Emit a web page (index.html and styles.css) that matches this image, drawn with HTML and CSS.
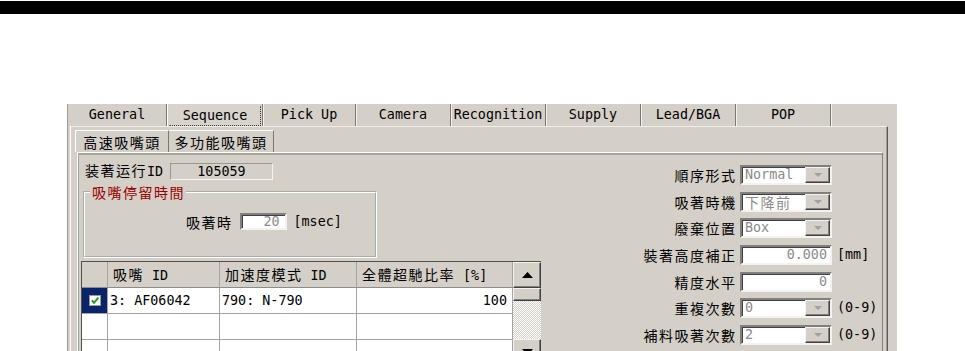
FILE: index.html
```html
<!DOCTYPE html>
<html>
<head>
<meta charset="utf-8">
<link rel="stylesheet" href="styles.css">
</head>
<body>
<div class="topbar"></div>
<div class="window">
  <div class="tabs">
    <div class="tab w99">General</div>
    <div class="tab w96 sel"><span class="focus">Sequence</span></div>
    <div class="tab w93">Pick Up</div>
    <div class="tab">Camera</div>
    <div class="tab">Recognition</div>
    <div class="tab">Supply</div>
    <div class="tab">Lead/BGA</div>
    <div class="tab">POP</div>
  </div>
  <div class="panel">
    <div class="subtabs">
      <div class="subtab st1 sel"><span class="cj">高速吸嘴頭</span></div>
      <div class="subtab st2"><span class="cj">多功能吸嘴頭</span></div>
    </div>
    <div class="inner">
      <div class="leftcol">
        <div class="idrow">
          <span class="idlbl"><span class="cj">装著运行</span>ID</span>
          <span class="robox">105059</span>
        </div>
        <fieldset class="group">
          <legend class="cj">吸嘴停留時間</legend>
          <div class="grow">
            <span class="cj">吸著時</span>
            <span class="field small">20</span>
            <span>[msec]</span>
          </div>
        </fieldset>
        <div class="gridwrap">
          <div class="grid">
            <div class="row head">
              <div class="cell"></div>
              <div class="cell hc"><span><span class="cj">吸嘴</span> ID</span></div>
              <div class="cell hc"><span><span class="cj">加速度模式</span> ID</span></div>
              <div class="cell hc"><span><span class="cj">全體超馳比率</span> [%]</span></div>
            </div>
            <div class="row">
              <div class="cell rh selrh">
                <svg class="chk" width="12" height="11" viewBox="0 0 12 11"><rect x="0.5" y="0.5" width="11" height="10" fill="#fff" stroke="#9a9a9a"/><path d="M2.8 5.4 L5 7.8 L9.4 2.6" fill="none" stroke="#1e9a1e" stroke-width="2"/></svg>
              </div>
              <div class="cell dc">3: AF06042</div>
              <div class="cell dc">790: N-790</div>
              <div class="cell dc num">100</div>
            </div>
            <div class="row">
              <div class="cell rh"></div>
              <div class="cell dc"></div>
              <div class="cell dc"></div>
              <div class="cell dc"></div>
            </div>
            <div class="row">
              <div class="cell rh"></div>
              <div class="cell dc"></div>
              <div class="cell dc"></div>
              <div class="cell dc"></div>
            </div>
          </div>
          <div class="vscroll">
            <div class="sbtn"><svg width="11" height="6" viewBox="0 0 11 6"><polygon points="0,6 5.5,0 11,6" fill="#000"/></svg></div>
            <div class="thumb"></div>
            <div class="track"></div>
            <div class="sbtn down"><svg width="11" height="6" viewBox="0 0 11 6"><polygon points="0,0 5.5,6 11,0" fill="#000"/></svg></div>
          </div>
        </div>
      </div>
      <div class="form">
        <span class="flbl cj">順序形式</span>
        <div class="combo"><span class="ctext">Normal</span><span class="dd"><svg width="8" height="4" viewBox="0 0 8 4"><polygon points="0,0 4,4 8,0" fill="#a0a0a0"/></svg></span></div>
        <span></span>

        <span class="flbl cj">吸著時機</span>
        <div class="combo"><span class="ctext cj">下降前</span><span class="dd"><svg width="8" height="4" viewBox="0 0 8 4"><polygon points="0,0 4,4 8,0" fill="#a0a0a0"/></svg></span></div>
        <span></span>

        <span class="flbl cj">廢棄位置</span>
        <div class="combo"><span class="ctext">Box</span><span class="dd"><svg width="8" height="4" viewBox="0 0 8 4"><polygon points="0,0 4,4 8,0" fill="#a0a0a0"/></svg></span></div>
        <span></span>

        <span class="flbl cj">裝著高度補正</span>
        <div class="field wide">0.000</div>
        <span class="suffix">[mm]</span>

        <span class="flbl cj">精度水平</span>
        <div class="field wide">0</div>
        <span></span>

        <span class="flbl cj">重複次數</span>
        <div class="combo"><span class="ctext">0</span><span class="dd"><svg width="8" height="4" viewBox="0 0 8 4"><polygon points="0,0 4,4 8,0" fill="#a0a0a0"/></svg></span></div>
        <span class="suffix">(0-9)</span>

        <span class="flbl cj">補料吸著次數</span>
        <div class="combo"><span class="ctext">2</span><span class="dd"><svg width="8" height="4" viewBox="0 0 8 4"><polygon points="0,0 4,4 8,0" fill="#a0a0a0"/></svg></span></div>
        <span class="suffix">(0-9)</span>
      </div>
    </div>
  </div>
</div>
</body>
</html>
```

FILE: styles.css
```css
* { box-sizing: border-box; }
html, body { margin: 0; padding: 0; background: #fff; overflow: hidden; }
body {
  width: 965px;
  height: 351px;
  font-family: "DejaVu Sans Mono", "Noto Sans CJK JP", monospace;
  font-size: 13.4px;
  line-height: 16px;
  color: #000;
}
.cj {
  font-family: "Noto Sans CJK JP", "Noto Sans CJK TC", sans-serif;
  font-size: 14px;
  letter-spacing: 1.5px;
  line-height: 16px;
}
.topbar { height: 13px; margin-top: 1px; background: #000; }

.window {
  margin: 90px 0 0 67px;
  width: 830px;
  height: 260px;
  background: #d4d0c8;
  border-left: 1px solid #a09c94;
  overflow: hidden;
}

/* top tabs */
.tabs { display: flex; height: 22px; }
.tab {
  width: 95px;
  height: 22px;
  display: flex;
  align-items: center;
  justify-content: center;
  border-right: 1px solid #7c7870;
  box-shadow: 1px 0 0 #f4f2ee;
  white-space: nowrap;
}
.w99 { width: 99px; }
.w96 { width: 96px; }
.w93 { width: 93px; }
.tab.sel { border-left: 1px solid #fff; background: #d8d4cc; }
.focus {
  flex: 1;
  align-self: stretch;
  margin: 2px 1px 0 1px;
  border: 1px dotted #333;
  border-top-color: transparent;
  border-left-color: transparent;
  display: flex;
  align-items: center;
  justify-content: center;
}

/* outer panel */
.panel {
  margin-left: 2px;
  width: 818px;
  height: 240px;
  border-left: 1px solid #fff;
  border-top: 1px solid #f0eee8;
  border-right: 1px solid #5c5a56;
  box-shadow: inset -1px 0 0 #a09c94;
}
.subtabs { display: flex; height: 22px; margin: 3px 0 0 4px; }
.subtab {
  height: 22px;
  display: flex;
  align-items: center;
  justify-content: center;
  border-top: 1px solid #fff;
  border-right: 1px solid #7c7870;
}
.st1 { width: 94px; border-left: 1px solid #fff; }
.st2 { width: 105px; }

/* inner panel */
.inner {
  margin-left: 6px;
  width: 806px;
  height: 220px;
  border-top: 1px solid #fff;
  border-left: 1px solid #fff;
  border-right: 1px solid #808080;
  box-shadow: inset 1px 2px 0 #a8a49c;
  padding: 10px 0 0 3px;
  display: flex;
  align-items: flex-start;
}
.leftcol { width: 460px; display: flex; flex-direction: column; }

.idrow { display: flex; align-items: center; height: 16px; }
.idlbl { margin-left: 4px; width: 85px; white-space: nowrap; }
.robox {
  width: 103px;
  height: 17px;
  border: 1px solid;
  border-color: #9a9892 #f6f4f0 #f6f4f0 #9a9892;
  text-align: center;
  line-height: 15px;
}

.group {
  margin: 6px 0 0 2px;
  width: 294px;
  padding: 14px 0 26px 0;
  border: 2px groove #fff;
  min-width: 0;
}
.group legend {
  margin-left: 5px;
  padding: 0 1px 0 2px;
  color: #990000;
  line-height: 14px;
}
.grow {
  display: flex;
  align-items: center;
  height: 17px;
  padding-left: 101px;
  gap: 7px;
}
.field {
  height: 17px;
  background: #fff;
  border: 2px solid;
  border-color: #808080 #f4f2ee #f4f2ee #808080;
  box-shadow: inset 1px 1px 0 #404040;
  color: #8a8a8a;
  text-align: right;
  padding-right: 3px;
  line-height: 13px;
}
.small { width: 47px; padding-right: 5px; }
.wide { width: 92px; height: 20px; line-height: 16px; }

/* data grid */
.gridwrap {
  margin-top: 3px;
  width: 460px;
  display: flex;
  border-top: 1px solid #505050;
  border-left: 1px solid #505050;
}
.grid { width: 431px; }
.row {
  display: grid;
  grid-template-columns: 26px 112px 137px 156px;
  height: 26px;
}
.cell {
  border-right: 1px solid #a4a4a4;
  border-bottom: 1px solid #a4a4a4;
  background: #fff;
  display: flex;
  align-items: center;
  white-space: nowrap;
  overflow: hidden;
}
.head .cell { background: #d4d0c8; border-bottom-color: #8c8c8c; }
.hc { padding-left: 5px; white-space: pre; }
.dc { padding-left: 2px; }
.num { justify-content: flex-end; padding-right: 5px; }
.selrh { background: #0a246a; justify-content: center; }
.chk { display: block; margin-left: 1px; }

.vscroll { width: 28px; display: flex; flex-direction: column; }
.sbtn {
  height: 26px;
  background: #d4d0c8;
  border: 1px solid;
  border-color: #f4f2ee #404040 #404040 #f4f2ee;
  box-shadow: inset -1px -1px 0 #808080;
  display: flex;
  align-items: center;
  justify-content: center;
}
.thumb {
  height: 13px;
  background: #d4d0c8;
  border: 1px solid;
  border-color: #f4f2ee #404040 #404040 #f4f2ee;
  box-shadow: inset -1px -1px 0 #808080;
}
.track {
  height: 38px;
  background-color: #fff;
  background-image: repeating-conic-gradient(#d4d0c8 0 25%, #fff 0 50%);
  background-size: 2px 2px;
}

/* right form */
.form {
  margin-top: 2px;
  display: grid;
  grid-template-columns: 194px 92px auto;
  grid-auto-rows: 20px;
  column-gap: 5px;
  row-gap: 6.7px;
  align-items: center;
}
.flbl { text-align: right; white-space: nowrap; letter-spacing: 1.5px; margin-right: -1.5px; }
.combo {
  width: 92px;
  height: 20px;
  display: flex;
  align-items: center;
  background: #fff;
  border: 2px solid;
  border-color: #808080 #f4f2ee #f4f2ee #808080;
  box-shadow: inset 1px 1px 0 #404040;
}
.ctext {
  flex: 1;
  color: #8a8a8a;
  padding-left: 3px;
  line-height: 16px;
  white-space: nowrap;
}
.dd {
  width: 25px;
  align-self: stretch;
  background: #d4d0c8;
  border: 1px solid;
  border-color: #f4f2ee #404040 #404040 #f4f2ee;
  box-shadow: inset -1px -1px 0 #808080;
  display: flex;
  align-items: center;
  justify-content: center;
}
.suffix { white-space: nowrap; }
```
